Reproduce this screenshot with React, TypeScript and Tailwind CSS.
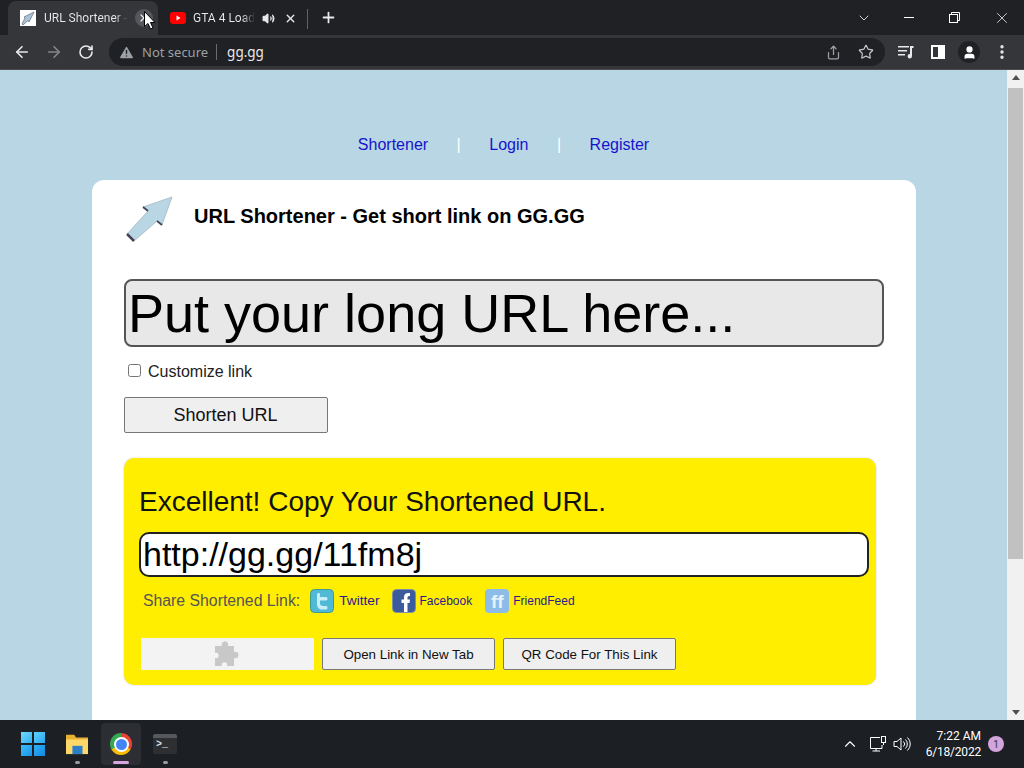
import { useState } from 'react';
import { ArrowLeft, ArrowRight, RotateCw, X, Plus, ChevronDown, ChevronUp, Star, EllipsisVertical, TriangleAlert, Volume2, User, Share } from 'lucide-react';

const uiFont = "font-['Roboto',sans-serif]";

function TitleBar() {
  return (
    <div className={`flex h-[35px] shrink-0 items-end bg-[#202124] ${uiFont} text-[12px] text-[#e8eaed]`}>
      <div className="ml-[8px] flex h-[34px] w-[150px] items-center rounded-t-[8px] bg-[#35363a] pl-[12px] pr-[4px]">
        <span className="flex h-4 w-4 items-center justify-center bg-white">
          <svg viewBox="0 0 16 16" className="h-4 w-4"><path d="M2 14 L5 8 L4 7 L14 2 L9 12 L8 10.500 L3 15 Z" fill="#a9c4d4" stroke="#667" strokeWidth="0.700" /></svg>
        </span>
        <span className="ml-[8px] w-[84px] whitespace-nowrap bg-gradient-to-r from-[#e8eaed] from-[85%] to-transparent bg-clip-text pb-[1px] text-transparent">URL Shortener -</span>
        <span className="ml-[7px] flex h-[18px] w-[18px] items-center justify-center rounded-full bg-[#55575c]">
          <X size={12} strokeWidth={2.5} />
        </span>
      </div>
      <div className="flex h-[34px] w-[149px] items-center pl-[12px]">
        <svg viewBox="0 0 16 12" className="h-[12px] w-4">
          <rect width="16" height="12" rx="3" fill="#f00" />
          <path d="M6.500 3.500 L10.500 6 L6.500 8.500 Z" fill="#fff" />
        </svg>
        <span className="ml-[7px] w-[62px] whitespace-nowrap bg-gradient-to-r from-[#e8eaed] from-[80%] to-transparent bg-clip-text pb-[1px] text-transparent">GTA 4 Load</span>
        <Volume2 size={13} className="ml-[7px]" fill="#e8eaed" />
        <X size={13} strokeWidth={2.5} className="ml-[9px]" />
      </div>
      <div className="mb-[6px] h-[20px] w-px bg-[#5f6368]" />
      <Plus size={17} strokeWidth={2.5} className="mb-[9px] ml-[12px]" />
      <div className="flex-1" />
      <div className="flex h-[35px] items-center text-white">
        <ChevronDown size={16} strokeWidth={1.2} className="mr-[32px]" />
        <span className="mr-[35px] h-px w-[10px] bg-white" />
        <svg viewBox="0 0 11 11" className="mr-[33px] h-[11px] w-[11px]" fill="none" stroke="#fff">
          <rect x="0.500" y="2.500" width="8" height="8" />
          <path d="M2.500 2.500 V0.500 H10.500 V8.500 H8.500" />
        </svg>
        <X size={18} strokeWidth={1} className="mr-[13px]" />
      </div>
    </div>
  );
}

function Toolbar() {
  return (
    <div className="flex h-[35px] shrink-0 items-center border-b border-[#4a4c50] bg-[#35363a] font-['Noto_Sans',sans-serif]">
      <ArrowLeft size={18} strokeWidth={2.2} className="ml-[13px] text-[#e8eaed]" />
      <ArrowRight size={18} strokeWidth={2.2} className="ml-[14px] text-[#85878a]" />
      <RotateCw size={16} strokeWidth={2.4} className="ml-[15px] text-[#e8eaed]" />
      <div className="ml-[15px] flex h-[28px] w-[776px] items-center rounded-full bg-[#202124]">
        <TriangleAlert size={17} fill="#9aa0a6" stroke="#202124" className="ml-[9px]" />
        <span className="ml-[7px] pt-[1px] text-[13px] text-[#9aa0a6]">Not secure</span>
        <span className="ml-[8px] h-[16px] w-px bg-[#6a6d70]" />
        <span className="ml-[10px] pt-[1px] text-[13.500px] text-[#e8eaed]">gg.gg</span>
        <div className="flex-1" />
        <Share size={15} className="mr-[17px] text-[#9aa0a6]" />
        <Star size={16} strokeWidth={1.8} className="mr-[11px] text-[#c4c7ca]" />
      </div>
      <svg viewBox="0 0 18 16" className="ml-[12px] h-[16px] w-[18px]" fill="#e8eaed">
        <rect x="1" y="2" width="11" height="1.500" />
        <rect x="1" y="6" width="9" height="1.500" />
        <rect x="1" y="10" width="7" height="1.500" />
        <path d="M13 2 H16.500 V4 H15 V12 A2.200 2.200 0 1 1 13 10 Z" />
      </svg>
      <div className="ml-[16px] flex h-[14px] w-[14px] justify-end border-[2px] border-white bg-[#35363a]">
        <span className="h-full w-[5px] bg-white" />
      </div>
      <span className="ml-[13px] flex h-[22px] w-[22px] items-center justify-center rounded-full bg-[#202124]">
        <User size={15} fill="#fff" className="text-white" />
      </span>
      <EllipsisVertical size={18} strokeWidth={2.5} className="ml-[13px] text-[#e8eaed]" />
    </div>
  );
}

function TwitterIcon() {
  return (
    <svg viewBox="0 0 24 24" className="h-[24px] w-[24px]">
      <rect x="0.500" y="0.500" width="23" height="23" rx="4" fill="#4fb9d6" stroke="#3e9a8f" />
      <path d="M7 5 C7 3.500 10 3.500 10 5 V8 H16 C18 8 18 11.500 16 11.500 H10 V14 C10 16 11 17 13 17 H16 C18 17 18 20.500 16 20.500 H12 C9 20.500 7 18.500 7 15 Z" fill="#c9eef8" />
    </svg>
  );
}

function FacebookIcon() {
  return (
    <svg viewBox="0 0 24 24" className="h-[24px] w-[24px]">
      <rect x="0.500" y="0.500" width="23" height="23" rx="4" fill="#3b5b9c" stroke="#7f8f9f" />
      <path d="M12 23 V14 H9.500 V10.500 H12 V8 C12 5 14 3.500 18 4 V7 C16 7 15.500 7.500 15.500 8.500 V10.500 H18 L17.500 14 H15.500 V23 Z" fill="#fff" />
    </svg>
  );
}

function FriendFeedIcon() {
  return (
    <span className="flex h-[24px] w-[24px] items-center justify-center rounded-[4px] bg-[#8dbce8] font-['Liberation_Sans',sans-serif] text-[19px] font-bold leading-none text-[#e6f2fc]">
      ff
    </span>
  );
}

function Page() {
  const [longUrl, setLongUrl] = useState('');
  return (
    <div className="flex min-h-0 flex-1">
      <div className="min-w-0 flex-1 overflow-hidden bg-[#b8d6e4] font-['Liberation_Sans',sans-serif]">
        <nav className="flex h-[110px] items-start justify-center pt-[63px] text-[16px] text-[#1414cc]">
          <a href="#">Shortener</a>
          <span className="mx-[28.500px] text-white">|</span>
          <a href="#">Login</a>
          <span className="mx-[28.500px] text-white">|</span>
          <a href="#">Register</a>
        </nav>
        <main className="ml-[92px] h-[600px] w-[824px] rounded-[12px] bg-white px-[32px] pt-[16px]">
          <div className="flex h-[83px] items-start">
            <svg viewBox="0 0 50 50" className="h-[50px] w-[50px]">
              <path d="M3 38 L24 15 L19 11 L48 1 L38 29 L33 25 L10 45 Z" fill="#b8d6e4" stroke="#a8b8c2" strokeWidth="0.800" />
              <path d="M3 38 L10 45" stroke="#445" strokeWidth="2.500" />
              <path d="M24 15 L19 11 M33 25 L38 29" stroke="#445" strokeWidth="1.800" />
            </svg>
            <h1 className="ml-[20px] mt-[8px] text-[20px] font-bold leading-[24px] text-black">URL Shortener - Get short link on GG.GG</h1>
          </div>
          <input
            value={longUrl}
            onChange={(e) => setLongUrl(e.target.value)}
            placeholder="Put your long URL here..."
            className="block h-[68px] w-[760px] rounded-[8px] border-2 border-[#555] bg-[#e8e8e8] px-[2px] text-[54px] text-black outline-none placeholder:text-black"
          />
          <label className="ml-[4px] mt-[14px] flex h-[20px] items-center text-[16px] text-[#222]">
            <input type="checkbox" className="-mt-[1px] h-[13px] w-[13px]" />
            <span className="ml-[7px] mt-[1px]">Customize link</span>
          </label>
          <button className="mt-[16px] block h-[36px] w-[204px] rounded-[2px] border border-[#777] bg-[#efefef] pr-[1px] text-[18px] text-[#111]">
            Shorten URL
          </button>
          <section className="mt-[25px] h-[227px] w-[752px] rounded-[10px] bg-[#ffee00] px-[15px] pt-[28px] shadow-[0_0_2px_#ccc]">
            <h2 className="text-[28px] font-normal leading-[32px] text-[#111]">Excellent! Copy Your Shortened URL.</h2>
            <input
              readOnly
              value="http://gg.gg/11fm8j"
              className="mt-[14px] block h-[45px] w-[730px] rounded-[10px] border-2 border-[#222] bg-white px-[2px] text-[34px] text-black outline-none"
            />
            <div className="ml-[4px] mt-[11px] flex h-[26px] items-center">
              <span className="text-[15.800px] text-[#555]">Share Shortened Link:</span>
              <span className="ml-[10px]"><TwitterIcon /></span>
              <a href="#" className="ml-[5px] text-[13.700px] text-[#2a1a8c]">Twitter</a>
              <span className="ml-[12px]"><FacebookIcon /></span>
              <a href="#" className="ml-[4px] text-[12px] text-[#2a1a8c]">Facebook</a>
              <span className="ml-[13px]"><FriendFeedIcon /></span>
              <a href="#" className="ml-[4px] text-[12px] text-[#2a1a8c]">FriendFeed</a>
            </div>
            <div className="ml-[2px] mt-[24px] flex items-center">
              <div className="flex h-[32px] w-[173px] items-center justify-center bg-[#f3f3f3]">
                <svg viewBox="0 0 30 28" className="h-[28px] w-[30px]" fill="#c8c8c8">
                  <path d="M2 6 H9 C7 0 17 0 15 6 H21 V12 C27 10 27 20 21 18 V26 H14 C16 21 7 21 9 26 H2 V18 C7 20 7 11 2 13 Z" />
                </svg>
              </div>
              <button className="ml-[8px] h-[32px] w-[173px] rounded-[2px] border border-[#777] bg-[#efefef] pt-[1px] text-[13.333px] text-[#111]">
                Open Link in New Tab
              </button>
              <button className="ml-[8px] h-[32px] w-[173px] rounded-[2px] border border-[#777] bg-[#efefef] pt-[1px] text-[13.333px] text-[#111]">
                QR Code For This Link
              </button>
            </div>
          </section>
        </main>
      </div>
      <div className="flex w-[17px] shrink-0 flex-col items-center bg-[#f1f1f1]">
        <span className="mt-[5px] h-0 w-0 border-x-[4px] border-b-[5px] border-x-transparent border-b-[#505050]" />
        <div className="mt-[8px] h-[471px] w-[15px] bg-[#c1c1c1]" />
        <div className="flex-1" />
        <span className="mb-[5px] h-0 w-0 border-x-[4px] border-t-[5px] border-x-transparent border-t-[#505050]" />
      </div>
    </div>
  );
}

function Taskbar() {
  return (
    <div className={`flex h-[48px] shrink-0 items-center bg-[#1c1f23] ${uiFont} text-[12px] text-white`}>
      <div className="ml-[21px] grid h-[24px] w-[24px] grid-cols-2 gap-[2px]">
        <span className="bg-gradient-to-br from-[#6fd8fd] to-[#2fb0f5]" />
        <span className="bg-gradient-to-br from-[#5cd0fc] to-[#28a8f3]" />
        <span className="bg-gradient-to-br from-[#3cbcf8] to-[#1a94e8]" />
        <span className="bg-gradient-to-br from-[#30b0f5] to-[#1488e0]" />
      </div>
      <div className="relative ml-[20px] flex h-[40px] w-[24px] items-center justify-center">
        <svg viewBox="0 0 26 24" className="h-[22px] w-[25px]">
          <path d="M1 2 H10 L12 5 H25 V23 H1 Z" fill="#e8b030" />
          <path d="M1 7 H25 V23 H1 Z" fill="#fdd868" />
          <rect x="8" y="14" width="11" height="9" fill="#2a7fc8" />
        </svg>
        <span className="absolute bottom-0 h-[3px] w-[5px] rounded-full bg-[#9a9a9a]" />
      </div>
      <div className="relative ml-[12px] flex h-[42px] w-[40px] items-center justify-center rounded-[4px] bg-[#2c2e33]">
        <span className="h-[22px] w-[22px] rounded-full bg-[conic-gradient(#ea4335_0deg_120deg,#fbbc04_120deg_240deg,#34a853_240deg_360deg)] p-[5.500px]">
          <span className="block h-full w-full rounded-full bg-[#4285f4] ring-[2px] ring-white" />
        </span>
        <span className="absolute bottom-[1px] h-[3px] w-[16px] rounded-full bg-[#d9a6e0]" />
      </div>
      <div className="relative ml-[12px] flex h-[40px] w-[24px] items-center justify-center">
        <div className="h-[20px] w-[24px] rounded-[2px] border-t-[4px] border-[#55585c] bg-[#2d2f33] pl-[3px] pt-[1px] font-['Liberation_Mono',monospace] text-[10px] font-bold leading-[12px] text-[#ddd]">
          &gt;_
        </div>
        <span className="absolute bottom-0 h-[3px] w-[5px] rounded-full bg-[#9a9a9a]" />
      </div>
      <div className="flex-1" />
      <ChevronUp size={18} strokeWidth={1.5} className="mr-[10px]" />
      <svg viewBox="0 0 18 18" className="h-[18px] w-[18px]" fill="none" stroke="#fff" strokeWidth="1">
        <path d="M11 2.500 H1.500 V13.500 H13 V10 M7 13.500 V16 M3.500 16 H11" />
        <rect x="12.500" y="1.500" width="4" height="6" />
        <path d="M14.500 7.500 V10" />
      </svg>
      <svg viewBox="0 0 18 18" className="ml-[6px] h-[18px] w-[18px]" fill="none" stroke="#fff" strokeWidth="1">
        <path d="M1 6.500 H4 L8 3 V15 L4 11.500 H1 Z" />
        <path d="M10.500 6.500 A3.500 3.500 0 0 1 10.500 11.500 M12.500 4.500 A6.500 6.500 0 0 1 12.500 13.500 M14.500 2.500 A9 9 0 0 1 14.500 15.500" />
      </svg>
      <div className="ml-[16px] flex w-[54px] flex-col items-end leading-[16px]">
        <span>7:22 AM</span>
        <span className="tracking-[-0.2px]">6/18/2022</span>
      </div>
      <span className="ml-[7px] mr-[20px] flex h-[16px] w-[16px] items-center justify-center rounded-full bg-[#d4a5dc] text-[10px] text-[#333]">1</span>
    </div>
  );
}

export default function App() {
  return (
    <div className="relative flex h-[768px] w-[1024px] flex-col overflow-hidden">
      <TitleBar />
      <Toolbar />
      <Page />
      <Taskbar />
      {/* mouse pointer sits over the first tab */}
      <svg viewBox="0 0 12 19" className="absolute left-[144px] top-[11px] h-[19px] w-[12px]">
        <path d="M0.500 0.500 V15.500 L4 12.500 L6.500 18 L9 17 L6.500 11.500 H11 Z" fill="#fff" stroke="#000" />
      </svg>
    </div>
  );
}
